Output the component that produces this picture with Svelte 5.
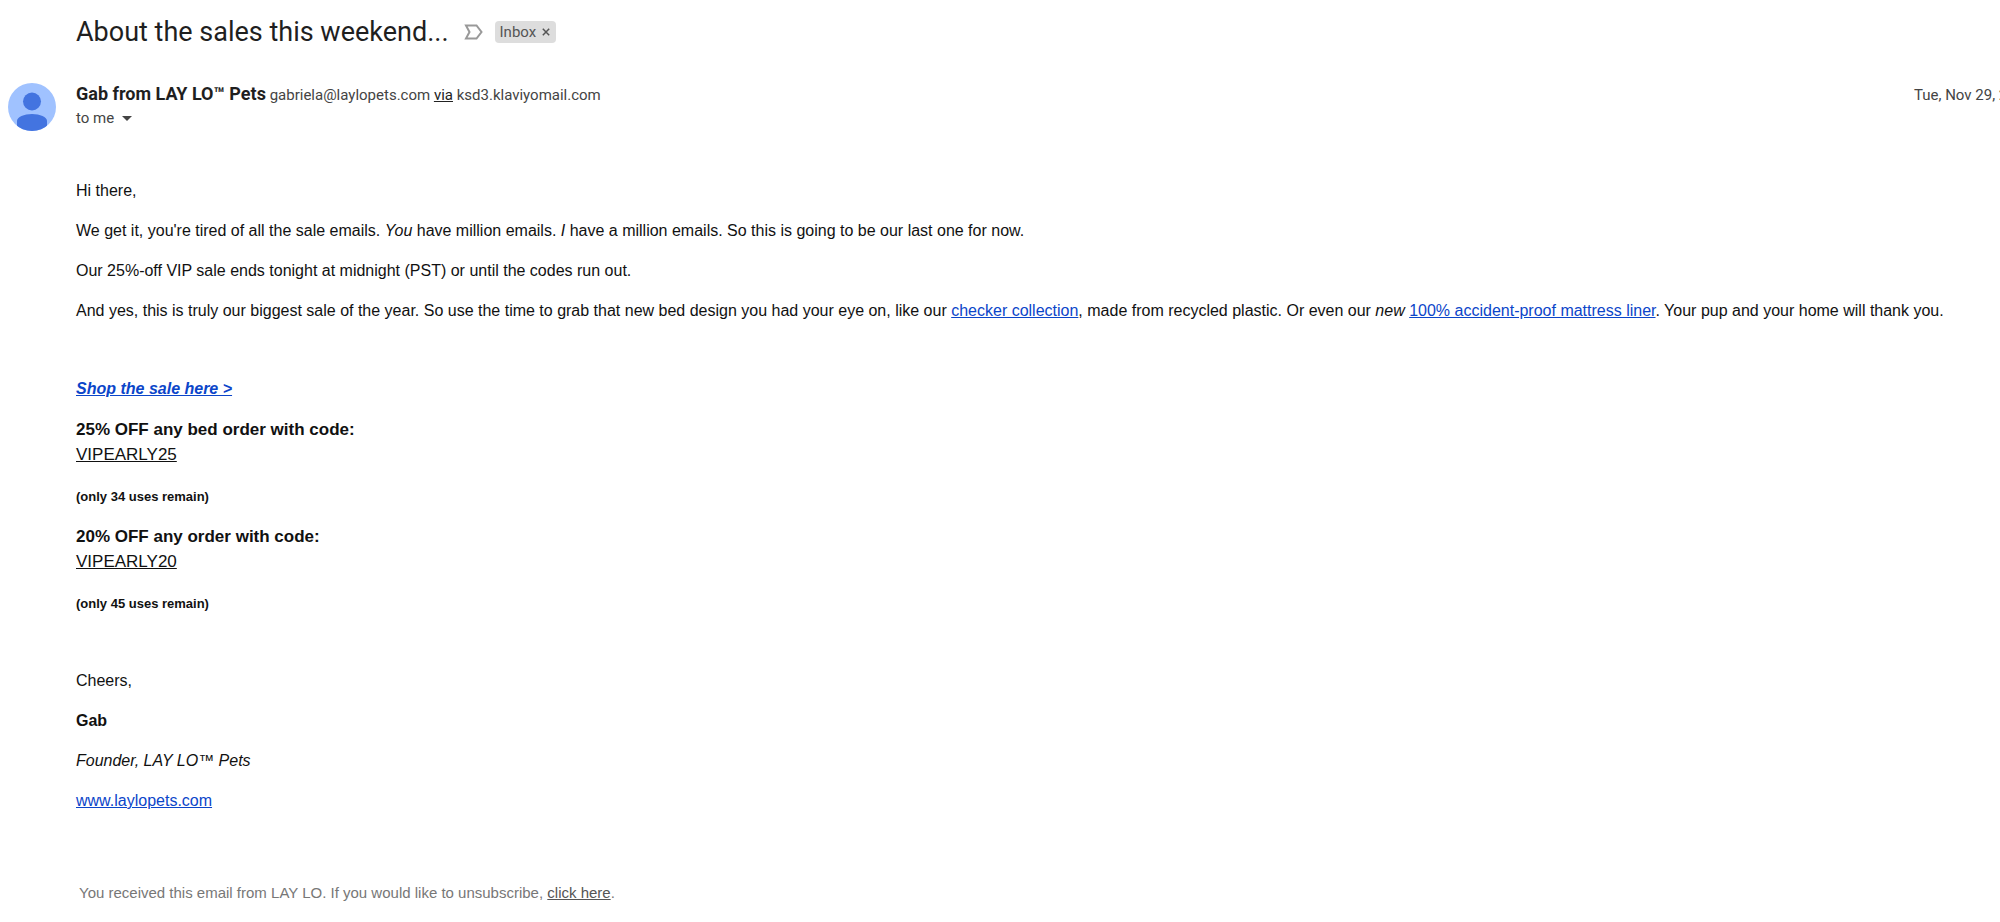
<script lang="ts">
  interface Offer {
    title: string;
    code: string;
    note: string;
  }

  const subject = "About the sales this weekend...";

  const offers: Offer[] = [
    {
      title: "25% OFF any bed order with code:",
      code: "VIPEARLY25",
      note: "(only 34 uses remain)",
    },
    {
      title: "20% OFF any order with code:",
      code: "VIPEARLY20",
      note: "(only 45 uses remain)",
    },
  ];

  let inInbox = $state(true);
</script>

<main class="message">
  <header class="subject">
    <h1>{subject}</h1>
    <button class="important" aria-label="Mark as important">
      <svg viewBox="0 0 20 16" width="20" height="16">
        <path d="M2 1.500h10.500L17.500 8l-5 6.500H2L5.500 8z" />
      </svg>
    </button>
    {#if inInbox}
      <span class="label">
        Inbox
        <button aria-label="Remove label Inbox" onclick={() => (inInbox = false)}>
          <svg viewBox="0 0 8 8" width="8" height="8">
            <path d="M.8.8l6.400 6.400M7.200.8L.8 7.200" />
          </svg>
        </button>
      </span>
    {/if}
  </header>

  <section class="sender">
    <svg class="avatar" viewBox="0 0 48 48" width="48" height="48">
      <clipPath id="avatar-clip"><circle cx="24" cy="24" r="24" /></clipPath>
      <g clip-path="url(#avatar-clip)">
        <rect width="48" height="48" fill="#a0c2ff" />
        <circle cx="24" cy="18.500" r="9" fill="#4374e0" />
        <path d="M9 48V38c0-4 7-7 15-7s15 3 15 7v10z" fill="#4374e0" />
      </g>
    </svg>
    <div class="from">
      <div class="name">
        <strong>Gab from LAY LO™ Pets</strong>
        <span>gabriela@laylopets.com <a href="#via">via</a> ksd3.klaviyomail.com</span>
      </div>
      <button class="to">
        to me
        <svg viewBox="0 0 10 5" width="10" height="5"><path d="M0 0h10L5 5z" /></svg>
      </button>
    </div>
    <time datetime="2022-11-29">Tue, Nov 29, 2022</time>
  </section>

  <article class="body">
    <p>Hi there,</p>
    <p>
      We get it, you're tired of all the sale emails. <em>You</em> have million emails.
      <em>I</em> have a million emails. So this is going to be our last one for now.
    </p>
    <p>Our 25%-off VIP sale ends tonight at midnight (PST) or until the codes run out.</p>
    <p>
      And yes, this is truly our biggest sale of the year. So use the time to grab that new
      bed design you had your eye on, like our <a href="#checker">checker collection</a>,
      made from recycled plastic. Or even our <em>new</em>
      <a href="#liner">100% accident-proof mattress liner</a>. Your pup and your home will
      thank you.
    </p>

    <p class="shop"><a href="#sale">Shop the sale here &gt;</a></p>

    {#each offers as offer}
      <section class="offer">
        <h2>{offer.title}</h2>
        <div class="code">{offer.code}</div>
        <h3>{offer.note}</h3>
      </section>
    {/each}

    <div class="signature">
      <p>Cheers,</p>
      <p><strong>Gab</strong></p>
      <p><em>Founder, LAY LO™ Pets</em></p>
      <p><a href="#site">www.laylopets.com</a></p>
    </div>
  </article>

  <footer>
    You received this email from LAY LO. If you would like to unsubscribe,
    <a href="#unsubscribe">click here</a>.
  </footer>
</main>

<style>
  :global(body) {
    margin: 0;
    background: #fff;
  }

  .message {
    overflow: hidden;
    padding: 12px 0 16px 76px;
    color: #111;
    font-family: "Liberation Sans", Arial, sans-serif;
  }

  button {
    padding: 0;
    border: 0;
    background: none;
    color: inherit;
    font: inherit;
    cursor: pointer;
  }

  svg {
    display: block;
  }

  .subject {
    display: flex;
    align-items: center;
    height: 40px;
  }

  h1 {
    margin: 0;
    color: #1f1f1f;
    font-family: Roboto, sans-serif;
    font-size: 27px;
    font-weight: 400;
    line-height: 40px;
  }

  .important {
    margin: 0 11px 0 15px;
  }

  .important path {
    fill: none;
    stroke: #999;
    stroke-width: 2;
  }

  .label {
    display: flex;
    align-items: center;
    gap: 6px;
    height: 22px;
    padding: 0 6px 0 5px;
    border-radius: 4px;
    background: #ddd;
    color: #555;
    font-family: Roboto, sans-serif;
    font-size: 15px;
  }

  .label path {
    stroke: #555;
    stroke-width: 1.5;
  }

  .sender {
    display: flex;
    align-items: flex-start;
    margin: 31px 0 0 -68px;
    color: #444;
    font-family: Roboto, sans-serif;
    font-size: 15px;
    line-height: 24px;
  }

  .avatar {
    flex: none;
    margin-right: 20px;
  }

  .from {
    flex: 1;
  }

  .name {
    line-height: 22px;
  }

  .name strong {
    color: #1f1f1f;
    font-size: 18px;
    font-weight: 700;
  }

  .name a {
    color: #222;
  }

  .to {
    display: flex;
    align-items: center;
    gap: 8px;
  }

  .to path {
    fill: #444;
  }

  time {
    width: 86px;
    white-space: nowrap;
  }

  .body {
    margin-top: 48px;
    font-size: 16px;
    line-height: 24px;
  }

  p {
    margin: 0 0 16px;
  }

  .body a {
    color: #0b45c9;
  }

  .shop {
    margin-top: 54px;
    font-style: italic;
    font-weight: 700;
  }

  h2,
  h3 {
    margin: 0;
    font-weight: 700;
  }

  h2 {
    font-size: 17px;
    line-height: 26px;
  }

  .code {
    font-size: 17px;
    line-height: 24px;
    text-decoration: underline;
  }

  h3 {
    margin: 18px 0 15px;
    font-size: 13px;
    line-height: 24px;
  }

  .signature {
    margin-top: 53px;
  }

  footer {
    margin: 68px 0 0 3px;
    color: #777;
    font-size: 15px;
    line-height: 24px;
  }

  footer a {
    color: #555;
  }
</style>
